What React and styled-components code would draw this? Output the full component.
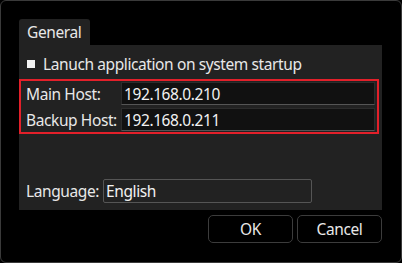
import React from 'react';
import styled, { createGlobalStyle } from 'styled-components';

const GlobalStyle = createGlobalStyle`
   html, body { margin: 0; padding: 0; background: #000; }
   body {
      font-family: "Noto Sans", "Open Sans", sans-serif;
      font-size: 15.5px;
      letter-spacing: -0.4px;
      color: #e8e8e8;
   }
`

const App = () => {
   return (
      <>
         <GlobalStyle />
         <Window>
            <TabBar>
               <Tab>General</Tab>
            </TabBar>
            <Panel>
               <CheckRow>
                  <Check />
                  <span>Lanuch application on system startup</span>
               </CheckRow>
               <Highlight>
                  <FieldRow>
                     <Label>Main Host:</Label>
                     <HostInput readOnly value="192.168.0.210" />
                  </FieldRow>
                  <FieldRow>
                     <Label>Backup Host:</Label>
                     <HostInput readOnly value="192.168.0.211" />
                  </FieldRow>
               </Highlight>
               <Spacer />
               <LangRow>
                  <span>Language:</span>
                  <LangInput readOnly value="English" />
               </LangRow>
            </Panel>
            <Buttons>
               <Button>OK</Button>
               <Button>Cancel</Button>
            </Buttons>
         </Window>
      </>
   );
}

const Window = styled.div`
   box-sizing: border-box;
   width: 402px;
   height: 263px;
   border: 1px solid #3a3a3a;
   border-radius: 6px;
   background: #000;
   padding: 18px 19px 0 18px;
   display: flex;
   flex-direction: column;
`
const TabBar = styled.div`
   display: flex;
   height: 26px;
`
const Tab = styled.div`
   width: 71px;
   background: #222;
   border-radius: 3px 3px 0 0;
   line-height: 26px;
   padding-left: 8px;
   box-sizing: border-box;
`
const Panel = styled.div`
   background: #222;
   height: 165px;
   display: flex;
   flex-direction: column;
`
const CheckRow = styled.div`
   display: flex;
   align-items: center;
   gap: 8px;
   padding: 8px 0 0 8px;
   height: 21px;
   white-space: nowrap;
`
const Check = styled.div`
   width: 8px;
   height: 8px;
   background: #f2f2f2;
`
const Highlight = styled.div`
   margin-top: 5px;
   width: 360px;
   height: 55px;
   box-sizing: border-box;
   border: 2px solid #e3202a;
   padding: 1px 2px 0 5px;
   display: flex;
   flex-direction: column;
   gap: 3px;
`
const FieldRow = styled.div`
   display: flex;
   align-items: center;
   height: 23px;
`
const Label = styled.span`
   width: 95px;
   flex: none;
   white-space: nowrap;
`
const HostInput = styled.input`
   flex: 1;
   min-width: 0;
   height: 23px;
   box-sizing: border-box;
   background: #111;
   border: 1px solid #2c2c2c;
   border-bottom-color: #555;
   color: #f2f2f2;
   font: inherit;
   letter-spacing: inherit;
   padding: 0 2px;
   outline: none;
`
const Spacer = styled.div`
   flex: 1;
`
const LangRow = styled.div`
   display: flex;
   align-items: center;
   gap: 4px;
   padding: 0 0 7px 7px;
   white-space: nowrap;
`
const LangInput = styled.input`
   width: 209px;
   height: 24px;
   box-sizing: border-box;
   background: #222;
   border: 1px solid #555;
   border-radius: 2px;
   color: #f2f2f2;
   font: inherit;
   letter-spacing: inherit;
   padding: 0 2px;
   outline: none;
`
const Buttons = styled.div`
   display: flex;
   justify-content: flex-end;
   gap: 4px;
   margin-top: 5px;
`
const Button = styled.button`
   width: 85px;
   height: 28px;
   background: #000;
   border: 1px solid #3c3c3c;
   border-radius: 5px;
   color: #e8e8e8;
   font: inherit;
   letter-spacing: inherit;
`

export default App;
